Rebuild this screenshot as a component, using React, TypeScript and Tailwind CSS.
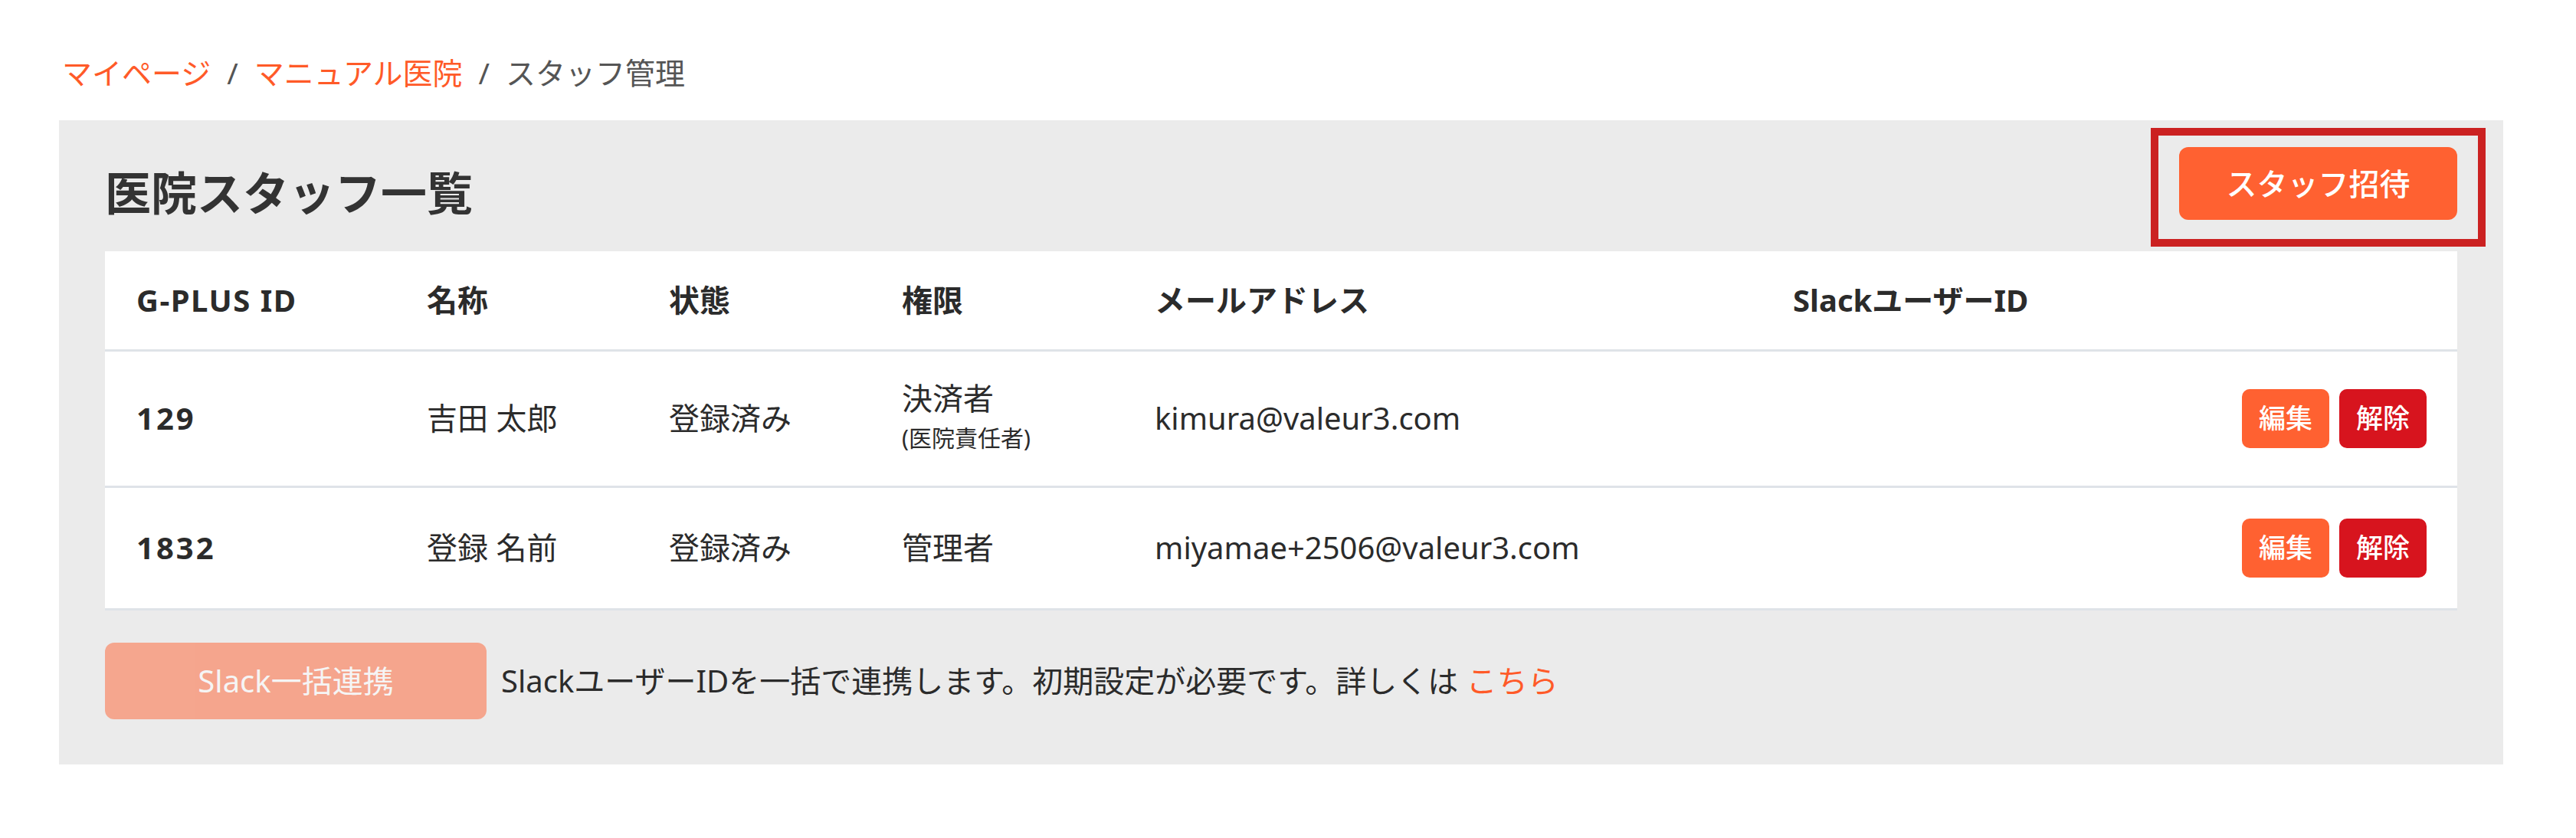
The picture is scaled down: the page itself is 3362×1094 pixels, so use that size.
const staff = [
  {
    id: '129',
    name: '吉田 太郎',
    status: '登録済み',
    role: '決済者',
    note: '(医院責任者)',
    email: 'kimura@valeur3.com',
  },
  {
    id: '1832',
    name: '登録 名前',
    status: '登録済み',
    role: '管理者',
    email: 'miyamae+2506@valeur3.com',
  },
];

function Breadcrumb() {
  return (
    <nav className="flex items-center text-[39px] leading-[57px] text-[#555]">
      <a className="text-[#ff5a28]">マイページ</a>
      <span className="px-[21px]">/</span>
      <a className="text-[#ff5a28]">マニュアル医院</a>
      <span className="px-[21px]">/</span>
      <span>スタッフ管理</span>
    </nav>
  );
}

function StaffTable() {
  return (
    <table className="w-full table-fixed bg-white text-[40px] text-[#2b2b2b]">
      <colgroup>
        <col className="w-[379px]" />
        <col className="w-[316px]" />
        <col className="w-[304px]" />
        <col className="w-[330px]" />
        <col className="w-[833px]" />
        <col />
      </colgroup>
      <thead>
        <tr className="h-[129px] border-b-[3px] border-[#dfe3e8] text-left font-bold">
          <th className="pl-[41px] tracking-[1.5px]">G-PLUS ID</th>
          <th className="pl-[41px]">名称</th>
          <th className="pl-[41px]">状態</th>
          <th className="pl-[41px]">権限</th>
          <th className="pl-[41px]">メールアドレス</th>
          <th className="pl-[41px]">SlackユーザーID</th>
        </tr>
      </thead>
      <tbody>
        {staff.map((s) => (
          <tr
            key={s.id}
            className={`${s.note ? 'h-[178px]' : 'h-[160px]'} border-b-[3px] border-[#dfe3e8]`}>
            <td className="pl-[41px] font-bold tracking-[3px]">{s.id}</td>
            <td className="pl-[41px]">{s.name}</td>
            <td className="pl-[41px]">{s.status}</td>
            <td className="pl-[41px]">
              <div className="leading-[52px]">{s.role}</div>
              {s.note && <div className="text-[30px] leading-[52px]">{s.note}</div>}
            </td>
            <td className="pl-[41px]">{s.email}</td>
            <td className="pr-[40px]">
              <div className="flex justify-end gap-[13px]">
                <button className="h-[77px] w-[114px] rounded-[10px] bg-[#ff6131] text-[35px] font-medium text-white">
                  編集
                </button>
                <button className="h-[77px] w-[114px] rounded-[10px] bg-[#d7141e] text-[35px] font-medium text-white">
                  解除
                </button>
              </div>
            </td>
          </tr>
        ))}
      </tbody>
    </table>
  );
}

export default function App() {
  return (
    <div
      className="min-h-[1094px] bg-white pt-[66px] pl-[77px]"
      style={{ fontFamily: '"Noto Sans", "Noto Sans CJK JP", sans-serif' }}>
      <div className="pl-[4px]">
        <Breadcrumb />
      </div>

      <section className="mt-[34px] w-[3190px] bg-[#ebebeb] px-[60px] pt-[35px] pb-[59px]">
        <div className="mb-[31px] flex items-start justify-between">
          <h1 className="mt-[15px] text-[60px] leading-[90px] font-bold text-[#333]">
            医院スタッフ一覧
          </h1>
          <div className="relative">
            <button className="h-[95px] w-[363px] rounded-[12px] bg-[#ff6131] text-[40px] font-medium text-white">
              スタッフ招待
            </button>
            <div className="pointer-events-none absolute -top-[25px] -right-[37px] -bottom-[35px] -left-[37px] border-[10px] border-[#cb2121]" />
          </div>
        </div>

        <StaffTable />

        <div className="mt-[42px] flex items-center gap-[19px] text-[40px] text-[#2b2b2b]">
          <button
            disabled
            className="h-[100px] w-[498px] rounded-[12px] bg-[#ff6131] text-white opacity-50">
            Slack一括連携
          </button>
          <p>
            SlackユーザーIDを一括で連携します。初期設定が必要です。詳しくは{' '}
            <a className="text-[#ff5a28]">こちら</a>
          </p>
        </div>
      </section>
    </div>
  );
}
